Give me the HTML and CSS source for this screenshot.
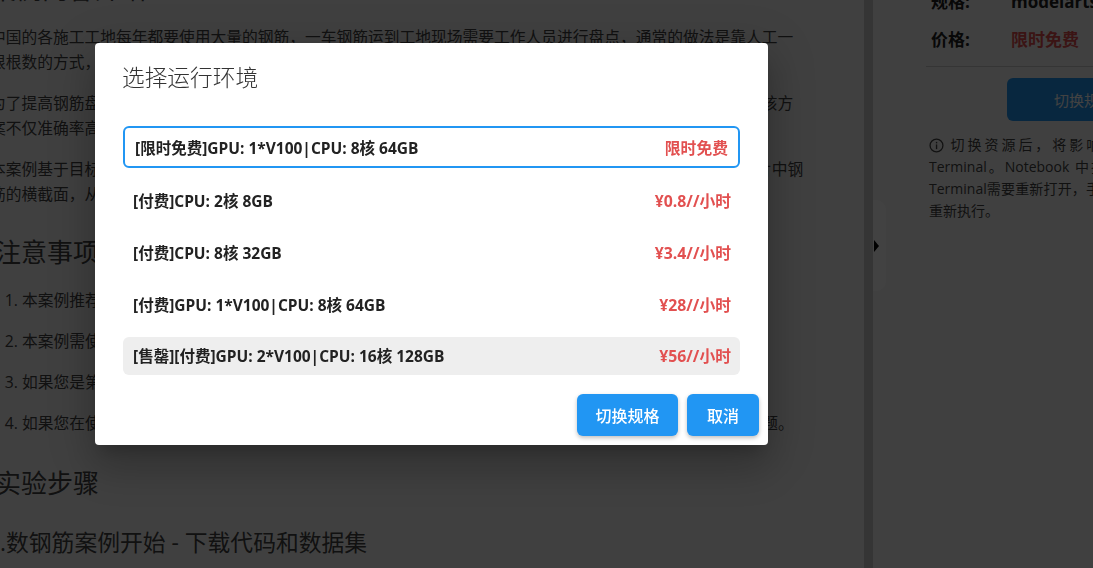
FILE: index.html
```html
<!DOCTYPE html>
<html lang="zh-CN">
<head>
    <meta charset="UTF-8">
    <meta name="viewport" content="width=device-width, initial-scale=1.0">
    <title>选择运行环境</title>
    <link rel="stylesheet" href="styles.css">
</head>
<body>

    <!-- 案例正文 -->
    <main class="article">
        <h2 class="article-top">案例内容介绍</h2>
        <p>中国的各施工工地每年都要使用大量的钢筋，一车钢筋运到工地现场需要工作人员进行盘点，通常的做法是靠人工一根根数的方式，非常耗时费力。</p>
        <p>为了提高钢筋盘点效率，业界提出了基于深度学习的目标检测方法来自动快速地完成钢筋的数量统计工作，使用该方案不仅准确率高，而且速度也很快。</p>
        <p>本案例基于目标检测算法YOLO实现钢筋的自动盘点，训练完成的模型能够较准确识别并框选出工地现场拍摄照片中钢筋的横截面，从而完成计数。</p>
        <h2>注意事项</h2>
        <ol>
            <li>本案例推荐使用GPU规格运行。</li>
            <li>本案例需使用对应的运行环境。</li>
            <li>如果您是第一次使用本案例，请先阅读说明。</li>
            <li>如果您在使用过程中遇到问题，请您在开发者社区论坛中发帖求助，我们的工程师会尽快为您解决相关的问题。</li>
        </ol>
        <h2>实验步骤</h2>
        <h3>.数钢筋案例开始 - 下载代码和数据集</h3>
    </main>

    <div class="gutter"></div>

    <!-- 右侧资源面板 -->
    <aside class="panel">
        <div class="spec-row spec-first"><span class="spec-label">规格:</span><span class="spec-value">modelarts.vm.gpu</span></div>
        <div class="spec-row"><span class="spec-label">价格:</span><span class="spec-price">限时免费</span></div>
        <hr class="panel-line">
        <button class="panel-btn">切换规格</button>
        <p class="panel-note">
            <svg class="info-icon" viewBox="0 0 14 14"><circle cx="7" cy="7" r="6" fill="none" stroke="currentColor" stroke-width="1.2"/><rect x="6.4" y="6" width="1.3" height="4.4" fill="currentColor"/><rect x="6.4" y="3.6" width="1.3" height="1.4" fill="currentColor"/></svg>
            切换资源后，将影响当前运行的 Terminal。Notebook 中执行的内容，Terminal需要重新打开，手动命令都需要重新执行。
        </p>
    </aside>

    <div class="handle"><span class="handle-arrow"></span></div>

    <div class="overlay"></div>

    <!-- 选择运行环境弹窗 -->
    <div class="dialog">
        <div class="dialog-title">选择运行环境</div>
        <div class="env-list">
            <div class="env-row selected"><span>[限时免费]GPU: 1*V100|CPU: 8核 64GB</span><span class="env-price">限时免费</span></div>
            <div class="env-row"><span>[付费]CPU: 2核 8GB</span><span class="env-price">¥0.8//小时</span></div>
            <div class="env-row"><span>[付费]CPU: 8核 32GB</span><span class="env-price">¥3.4//小时</span></div>
            <div class="env-row"><span>[付费]GPU: 1*V100|CPU: 8核 64GB</span><span class="env-price">¥28//小时</span></div>
            <div class="env-row sold-out"><span>[售罄][付费]GPU: 2*V100|CPU: 16核 128GB</span><span class="env-price">¥56//小时</span></div>
        </div>
        <div class="dialog-actions">
            <button class="btn btn-switch">切换规格</button>
            <button class="btn btn-cancel">取消</button>
        </div>
    </div>

</body>
</html>
```

FILE: styles.css
```css
* {
    margin: 0;
    padding: 0;
    box-sizing: border-box;
}

html, body {
    height: 100%;
    overflow: hidden;
}

body {
    display: flex;
    background: #f8f8f8;
    color: #333;
    font-family: "Open Sans", "Noto Sans CJK SC", sans-serif;
    position: relative;
}

/* 正文 */
.article {
    flex: 0 0 864px;
    height: 100%;
    overflow: hidden;
    padding-right: 60px;
    font-size: 15.75px;
    line-height: 25px;
    color: #444;
}

.article > * {
    margin-left: -10px;
}

.article-top {
    font-size: 26px;
    font-weight: 400;
    line-height: 36px;
    margin-top: -29px;
    margin-bottom: 17.5px;
}

.article p {
    margin-bottom: 16px;
}

.article h2 {
    font-size: 26px;
    font-weight: 400;
    line-height: 36px;
}

.article p + h2 {
    margin-top: 27px;
    margin-bottom: 18px;
    margin-left: -5px;
}

.article ol {
    padding-left: 32px;
    margin-bottom: 29.5px;
}

.article li {
    margin-bottom: 16px;
}

.article ol + h2 {
    margin-left: -5px;
}

.article h3 {
    font-size: 22.8px;
    font-weight: 400;
    line-height: 36px;
    margin-top: 24px;
    margin-left: 0;
}

.gutter {
    flex: 0 0 9px;
    background: #ccc;
}

/* 右侧面板 */
.panel {
    flex: 1;
    min-width: 0;
    padding-left: 53px;
    white-space: nowrap;
    overflow: hidden;
}

.spec-row {
    display: flex;
    font-size: 17px;
    font-weight: 700;
    color: #222;
    line-height: 24px;
    margin-bottom: 14px;
    padding-left: 5px;
}

.spec-first {
    margin-top: -10px;
}

.spec-label {
    flex: 0 0 80px;
}

.spec-price {
    color: #e25050;
}

.panel-line {
    border: none;
    border-top: 1px solid #ccc;
    width: 300px;
    margin-top: 2px;
}

.panel-btn {
    display: block;
    width: 154px;
    height: 43px;
    margin: 11px 0 13px 81px;
    background: #2196f3;
    color: #fff;
    font: inherit;
    font-size: 15px;
    border: none;
    border-radius: 6px;
}

.panel-note {
    width: 256px;
    white-space: normal;
    text-align: justify;
    margin-left: 3px;
    font-size: 14px;
    line-height: 22px;
    color: #444;
}

.info-icon {
    width: 15px;
    height: 15px;
    vertical-align: -3px;
}

.handle {
    position: absolute;
    left: 873px;
    top: 200px;
    width: 13px;
    height: 91px;
    background: #fff;
    border-radius: 0 10px 10px 0;
    display: flex;
    align-items: center;
}

.handle-arrow {
    width: 0;
    height: 0;
    margin-left: 1px;
    border-left: 5px solid #000;
    border-top: 6px solid transparent;
    border-bottom: 6px solid transparent;
}

.overlay {
    position: fixed;
    top: 0;
    left: 0;
    width: 100%;
    height: 100%;
    background: rgba(0, 0, 0, 0.74);
}

/* 弹窗 */
.dialog {
    position: absolute;
    left: 95px;
    top: 43px;
    width: 673px;
    height: 402px;
    background: #fff;
    border-radius: 4px;
    padding: 20px 9px 9px 28px;
    display: flex;
    flex-direction: column;
    box-shadow: 0 11px 15px -7px rgba(0, 0, 0, 0.2), 0 24px 38px 3px rgba(0, 0, 0, 0.14), 0 9px 46px 8px rgba(0, 0, 0, 0.12);
}

.dialog-title {
    font-size: 22.7px;
    line-height: 30px;
    font-weight: 300;
    color: #333;
    margin-left: -1px;
}

.env-list {
    margin-top: 33px;
    width: 617px;
    display: flex;
    flex-direction: column;
    gap: 13.7px;
}

.env-row {
    height: 38px;
    padding: 0 9px 0 10px;
    border-radius: 6px;
    display: flex;
    justify-content: space-between;
    align-items: center;
    font-size: 15.5px;
    font-weight: 700;
    color: #222;
}

.env-row.selected {
    height: 42px;
    padding: 0 10px;
    border: 2px solid #2196f3;
}

.env-row.sold-out {
    background: #eee;
}

.env-price {
    color: #e25050;
    font-size: 15.8px;
}

.dialog-actions {
    margin-top: auto;
    display: flex;
    justify-content: flex-end;
    gap: 9px;
}

.btn {
    height: 42px;
    background: #2196f3;
    color: #fff;
    font: inherit;
    font-size: 16px;
    font-weight: 500;
    border: none;
    border-radius: 6px;
    box-shadow: 0 2px 4px rgba(0, 0, 0, 0.25);
}

.btn-switch {
    width: 101px;
}

.btn-cancel {
    width: 72px;
}
```
